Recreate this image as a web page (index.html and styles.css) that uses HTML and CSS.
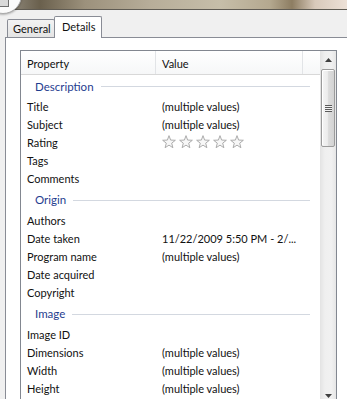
FILE: index.html
```html
<!DOCTYPE html>
<html lang="en">
<head>
    <meta charset="UTF-8">
    <title>Properties - Details</title>
    <link rel="stylesheet" href="styles.css">
</head>
<body>
    <!-- window title strip (blurred photo behind glass) -->
    <div class="titlebar">
        <div class="orb"><div class="orb-doc"></div></div>
    </div>

    <!-- tabs -->
    <div class="tabs">
        <div class="tab">General</div>
        <div class="tab active">Details</div>
    </div>

    <div class="panel">
        <div class="list">
            <div class="list-body">
                <div class="head">
                    <div class="hcell col-prop">Property</div>
                    <div class="hcell col-val">Value</div>
                    <div class="hcell col-rest"></div>
                </div>

                <div class="group first">Description</div>
                <div class="row"><span class="prop">Title</span><span class="val">(multiple values)</span></div>
                <div class="row"><span class="prop">Subject</span><span class="val">(multiple values)</span></div>
                <div class="row">
                    <span class="prop">Rating</span>
                    <span class="val stars">
                        <svg class="star" viewBox="0 0 13 13"><polygon points="6.5,0.6 8,4.7 12.4,4.9 9,7.6 10.1,11.8 6.5,9.4 2.9,11.8 4,7.6 0.6,4.9 5,4.7"/></svg>
                        <svg class="star" viewBox="0 0 13 13"><polygon points="6.5,0.6 8,4.7 12.4,4.9 9,7.6 10.1,11.8 6.5,9.4 2.9,11.8 4,7.6 0.6,4.9 5,4.7"/></svg>
                        <svg class="star" viewBox="0 0 13 13"><polygon points="6.5,0.6 8,4.7 12.4,4.9 9,7.6 10.1,11.8 6.5,9.4 2.9,11.8 4,7.6 0.6,4.9 5,4.7"/></svg>
                        <svg class="star" viewBox="0 0 13 13"><polygon points="6.5,0.6 8,4.7 12.4,4.9 9,7.6 10.1,11.8 6.5,9.4 2.9,11.8 4,7.6 0.6,4.9 5,4.7"/></svg>
                        <svg class="star" viewBox="0 0 13 13"><polygon points="6.5,0.6 8,4.7 12.4,4.9 9,7.6 10.1,11.8 6.5,9.4 2.9,11.8 4,7.6 0.6,4.9 5,4.7"/></svg>
                    </span>
                </div>
                <div class="row"><span class="prop">Tags</span><span class="val"></span></div>
                <div class="row"><span class="prop">Comments</span><span class="val"></span></div>

                <div class="group">Origin</div>
                <div class="row"><span class="prop">Authors</span><span class="val"></span></div>
                <div class="row"><span class="prop">Date taken</span><span class="val">11/22/2009 5:50 PM - 2/...</span></div>
                <div class="row"><span class="prop">Program name</span><span class="val">(multiple values)</span></div>
                <div class="row"><span class="prop">Date acquired</span><span class="val"></span></div>
                <div class="row"><span class="prop">Copyright</span><span class="val"></span></div>

                <div class="group">Image</div>
                <div class="row"><span class="prop">Image ID</span><span class="val"></span></div>
                <div class="row"><span class="prop">Dimensions</span><span class="val">(multiple values)</span></div>
                <div class="row"><span class="prop">Width</span><span class="val">(multiple values)</span></div>
                <div class="row"><span class="prop">Height</span><span class="val">(multiple values)</span></div>
            </div>

            <div class="scrollbar">
                <div class="sb-btn">
                    <svg width="7" height="4" viewBox="0 0 7 4"><path d="M0 4 L3.5 0 L7 4 Z"/></svg>
                </div>
                <div class="sb-thumb">
                    <div class="grip"></div>
                </div>
                <div class="sb-track"></div>
                <div class="sb-btn">
                    <svg width="7" height="4" viewBox="0 0 7 4"><path d="M0 0 L7 0 L3.5 4 Z"/></svg>
                </div>
            </div>
        </div>
    </div>
</body>
</html>
```
FILE: styles.css
```css
body {
    margin: 0;
    width: 347px;
    height: 399px;
    overflow: hidden;
    background-color: #f0f0f0;
    font-family: Lato, 'Open Sans', sans-serif;
    font-size: 11px;
    color: #111111;
}
.titlebar {
    position: relative;
    height: 9px;
    border-bottom: 1px solid #5f5b53;
    background: linear-gradient(to right, #9a958a 0, #6a604d 40px, #9c917c 85px, #b7ad99 150px, #c6bea9 220px, #b4a88f 270px, #8d7d62 292px, #d8c9ba 315px, #ede1d7 347px);
}
.orb {
    position: absolute;
    left: -16px;
    top: -24px;
    width: 36px;
    height: 36px;
    border-radius: 50%;
    background-color: #fbfbfb;
    border: 1px solid #a9a9a9;
    box-shadow: 0 1px 2px rgba(0, 0, 0, 0.25);
    overflow: hidden;
}
.orb-doc {
    position: absolute;
    left: 12px;
    top: 18px;
    width: 10px;
    height: 10px;
    border: 1px solid #6f6f6f;
    background-color: #d9d9d9;
}
.tabs {
    position: relative;
    z-index: 1;
    display: flex;
    align-items: flex-end;
    height: 27px;
    padding-left: 7px;
}
.tab {
    box-sizing: border-box;
    width: 48px;
    height: 18px;
    padding: 2px 0 0 5px;
    line-height: 14px;
    border: 1px solid #898c95;
    border-bottom: none;
    border-radius: 2px 2px 0 0;
    background: linear-gradient(#f3f3f3, #e4e4e4);
}
.tab.active {
    height: 22px;
    margin-left: -1px;
    margin-bottom: -1px;
    padding: 3px 0 0 7px;
    background: #ffffff;
}
.panel {
    margin-left: 5px;
    border-left: 1px solid #898c95;
    border-top: 1px solid #898c95;
    background-color: #ffffff;
    padding: 12px 0 0 14px;
    height: 349px;
    overflow: hidden;
}
.list {
    box-sizing: border-box;
    width: 317px;
    height: 355px;
    border: 1px solid #828790;
    display: flex;
    background-color: #ffffff;
}
.list-body {
    flex: 1;
}
.head {
    display: flex;
    height: 23px;
    border-bottom: 1px solid #d8d8d8;
    background: linear-gradient(#ffffff, #f6f7f8);
}
.hcell {
    box-sizing: border-box;
    padding: 2px 0 0 6px;
    line-height: 21px;
    border-right: 1px solid #e2e4e7;
}
.col-prop {
    width: 135px;
}
.col-val {
    width: 147px;
}
.col-rest {
    flex: 1;
    border-right: none;
}
.group {
    display: flex;
    align-items: center;
    height: 24px;
    padding: 1px 0 0 14px;
    box-sizing: border-box;
    color: #1f3d8f;
    font-size: 11.5px;
}
.group.first {
    height: 22px;
    padding-top: 0;
}
.group::after {
    content: "";
    flex: 1;
    height: 1px;
    margin: 1px 10px 0 7px;
    background-color: #d3d8e0;
}
.row {
    display: flex;
    align-items: center;
    height: 18px;
}
.prop {
    box-sizing: border-box;
    width: 141px;
    padding-left: 6px;
}
.stars {
    display: flex;
    gap: 3px;
}
.star {
    width: 14px;
    height: 14px;
    fill: #f7f7f7;
    stroke: #a9a9a9;
    stroke-width: 0.9;
    stroke-linejoin: round;
}
.scrollbar {
    width: 16px;
    display: flex;
    flex-direction: column;
    background: linear-gradient(to right, #e3e3e3, #efefef 30%, #f1f1f1 70%, #e6e6e6);
}
.sb-btn {
    height: 17px;
    display: flex;
    align-items: center;
    justify-content: center;
}
.sb-btn svg {
    fill: #404040;
}
.sb-thumb {
    box-sizing: border-box;
    height: 78px;
    margin: 1px 1px 0 1px;
    border: 1px solid #9b9b9b;
    border-radius: 2px;
    background: linear-gradient(to right, #f5f5f5, #ececec 45%, #dcdcdc 55%, #d3d3d3);
    box-shadow: inset 1px 1px 0 #ffffff;
    display: flex;
    align-items: center;
    justify-content: center;
}
.grip {
    width: 7px;
    height: 7px;
    background: repeating-linear-gradient(#5a5a5a 0, #5a5a5a 1px, #f2f2f2 1px, #f2f2f2 2px);
}
.sb-track {
    flex: 1;
}
```
